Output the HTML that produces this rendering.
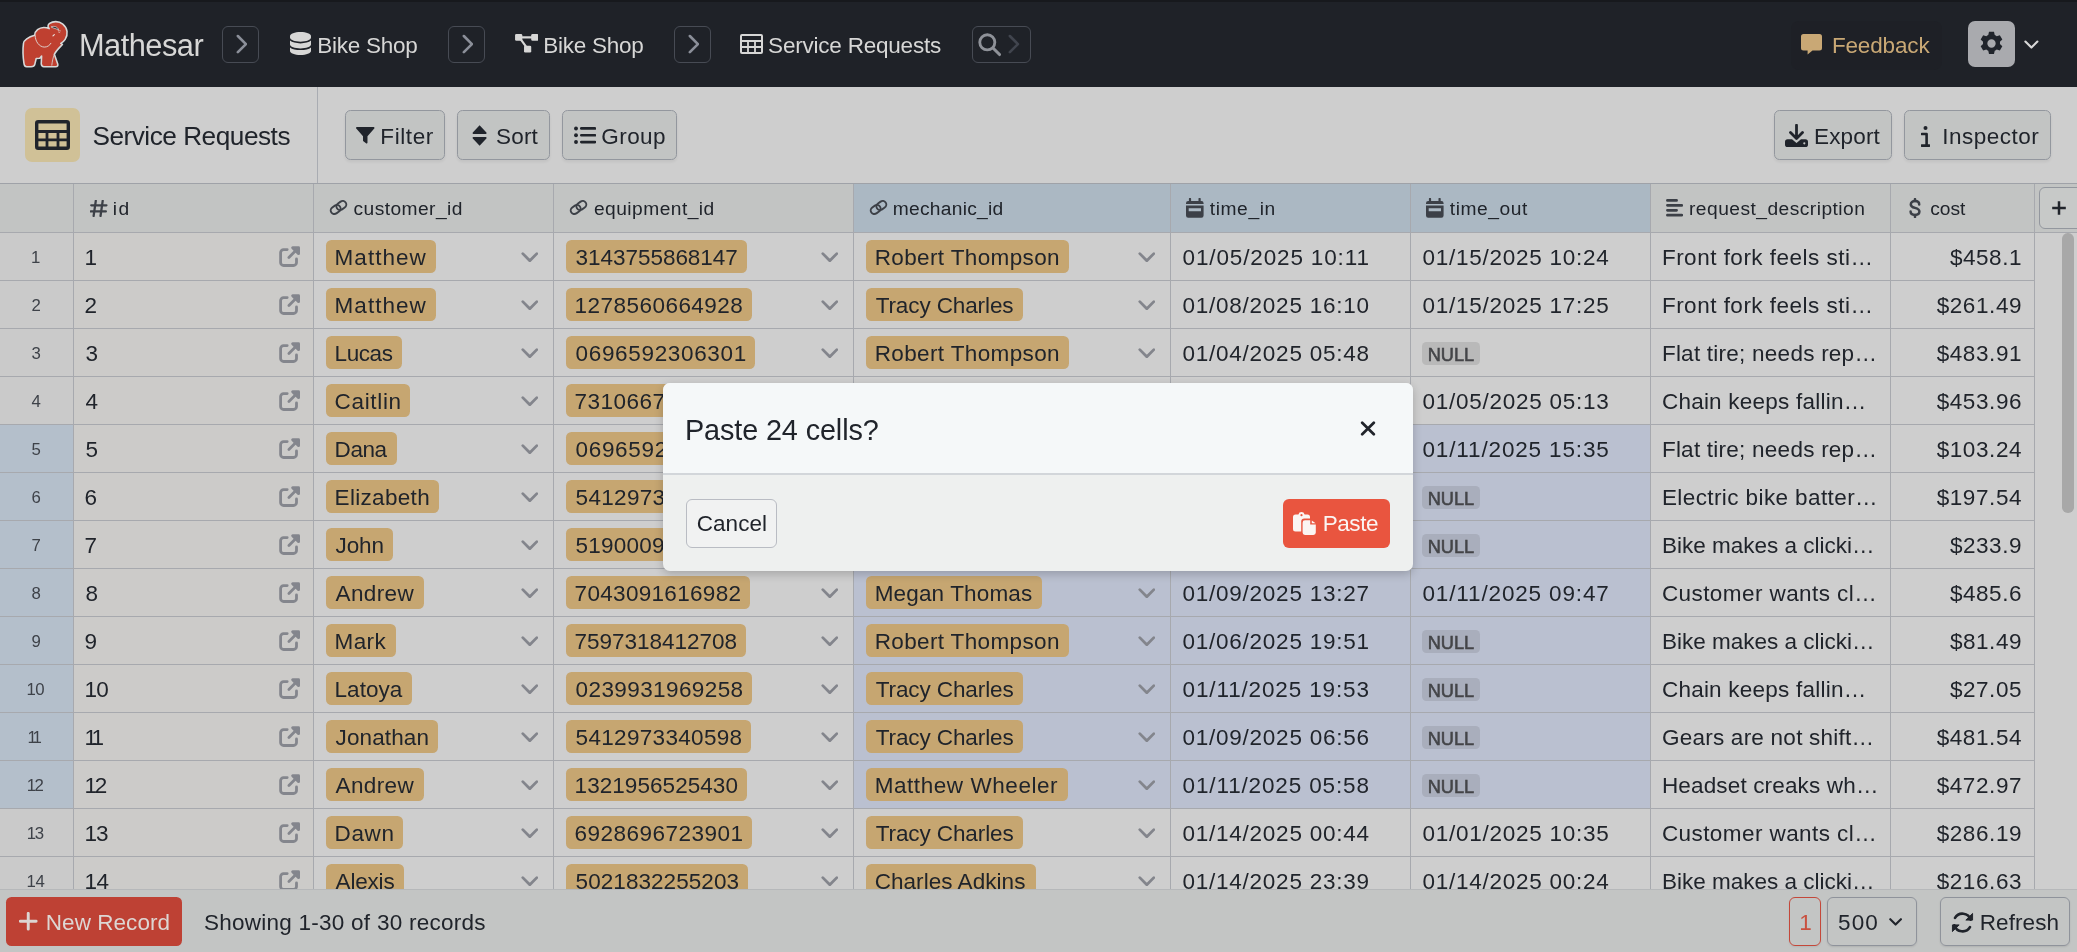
<!DOCTYPE html>
<html><head><meta charset="utf-8"><title>Service Requests | Mathesar</title>
<style>
*{box-sizing:border-box}
html,body{margin:0;padding:0}
body{width:2077px;height:952px;overflow:hidden;background:#cecece;font-family:"Liberation Sans",sans-serif;color:#20242b;position:relative}
.a{position:absolute;display:block}
.t{position:absolute;white-space:nowrap;line-height:1}
#page{position:absolute;left:0;top:0;width:2077px;height:952px;overflow:hidden;will-change:transform}
</style></head><body>
<div id="page">
<div id="grid" class="a" style="left:0;top:0;width:2077px;height:889px;overflow:hidden">
<div class="a" style="left:0px;top:233px;width:73px;height:656px;background:#cacaca;"></div>
<div class="a" style="left:74px;top:233px;width:239px;height:656px;background:#cccbc9;"></div>
<div class="a" style="left:0px;top:425px;width:73px;height:384px;background:#b4bfcb;"></div>
<div class="a" style="left:854px;top:425px;width:796px;height:384px;background:#bac0d0;"></div>
<div class="a" style="left:0px;top:232px;width:2035px;height:1px;background:#a7a9ae;"></div>
<div class="a" style="left:0px;top:280px;width:2035px;height:1px;background:#a7a9ae;"></div>
<div class="a" style="left:0px;top:328px;width:2035px;height:1px;background:#a7a9ae;"></div>
<div class="a" style="left:0px;top:376px;width:2035px;height:1px;background:#a7a9ae;"></div>
<div class="a" style="left:0px;top:424px;width:2035px;height:1px;background:#a7a9ae;"></div>
<div class="a" style="left:0px;top:472px;width:2035px;height:1px;background:#a7a9ae;"></div>
<div class="a" style="left:0px;top:520px;width:2035px;height:1px;background:#a7a9ae;"></div>
<div class="a" style="left:0px;top:568px;width:2035px;height:1px;background:#a7a9ae;"></div>
<div class="a" style="left:0px;top:616px;width:2035px;height:1px;background:#a7a9ae;"></div>
<div class="a" style="left:0px;top:664px;width:2035px;height:1px;background:#a7a9ae;"></div>
<div class="a" style="left:0px;top:712px;width:2035px;height:1px;background:#a7a9ae;"></div>
<div class="a" style="left:0px;top:760px;width:2035px;height:1px;background:#a7a9ae;"></div>
<div class="a" style="left:0px;top:808px;width:2035px;height:1px;background:#a7a9ae;"></div>
<div class="a" style="left:0px;top:856px;width:2035px;height:1px;background:#a7a9ae;"></div>
<span class="t" style="left:31.00px;top:250px;font-size:16.8px;color:#3e4249;">1</span>
<span class="t" style="left:84.40px;top:247px;font-size:22.5px;">1</span>
<svg class="a" style="left:279.1px;top:245.9px;" width="21" height="21" viewBox="0 0 21 21"><path d="M8.2 3.6 H4.6 A3 3 0 0 0 1.6 6.6 V16.5 A3 3 0 0 0 4.6 19.5 H14.5 A3 3 0 0 0 17.5 16.5 V13" fill="none" stroke="#84868d" stroke-width="2.8" stroke-linecap="round"/><path d="M13.6 1.7 H19.6 V7.7 Z" fill="#84868d" stroke="#84868d" stroke-width="2.8" stroke-linejoin="round"/><path d="M18.6 2.7 L9.9 11.4" fill="none" stroke="#84868d" stroke-width="2.8" stroke-linecap="round"/></svg>
<div class="a" style="left:326.1px;top:240px;width:109.9px;height:33px;background:#c6a671;border-radius:5.5px;"></div>
<span class="t" style="left:334.60px;top:247px;font-size:22.5px;letter-spacing:1.019px;">Matthew</span>
<svg class="a" style="left:520.7px;top:251.6px;" width="17.6" height="10.8" viewBox="0 0 16 10"><path d="M1.5 1.5 L8 8 L14.5 1.5" fill="none" stroke="#83858c" stroke-width="2.6" stroke-linecap="round" stroke-linejoin="round"/></svg>
<div class="a" style="left:566.1px;top:240px;width:180.7px;height:33px;background:#c6a671;border-radius:5.5px;"></div>
<span class="t" style="left:575.60px;top:247px;font-size:22.5px;letter-spacing:-0.038px;">3143755868147</span>
<svg class="a" style="left:820.9px;top:251.6px;" width="17.6" height="10.8" viewBox="0 0 16 10"><path d="M1.5 1.5 L8 8 L14.5 1.5" fill="none" stroke="#83858c" stroke-width="2.6" stroke-linecap="round" stroke-linejoin="round"/></svg>
<div class="a" style="left:866.2px;top:240px;width:202.8px;height:33px;background:#c6a671;border-radius:5.5px;"></div>
<span class="t" style="left:874.70px;top:247px;font-size:22.5px;letter-spacing:0.373px;">Robert Thompson</span>
<svg class="a" style="left:1137.5px;top:251.6px;" width="17.6" height="10.8" viewBox="0 0 16 10"><path d="M1.5 1.5 L8 8 L14.5 1.5" fill="none" stroke="#83858c" stroke-width="2.6" stroke-linecap="round" stroke-linejoin="round"/></svg>
<span class="t" style="left:1182.60px;top:247px;font-size:22.5px;letter-spacing:0.854px;">01/05/2025 10:11</span>
<span class="t" style="left:1422.50px;top:247px;font-size:22.5px;letter-spacing:0.743px;">01/15/2025 10:24</span>
<span class="t" style="left:1661.90px;top:247px;font-size:22.5px;letter-spacing:0.495px;">Front fork feels sti…</span>
<span class="t" style="left:1949.90px;top:247px;font-size:22.5px;letter-spacing:0.559px;">$458.1</span>
<span class="t" style="left:31.50px;top:298px;font-size:16.8px;color:#3e4249;">2</span>
<span class="t" style="left:84.40px;top:295px;font-size:22.5px;">2</span>
<svg class="a" style="left:279.1px;top:293.9px;" width="21" height="21" viewBox="0 0 21 21"><path d="M8.2 3.6 H4.6 A3 3 0 0 0 1.6 6.6 V16.5 A3 3 0 0 0 4.6 19.5 H14.5 A3 3 0 0 0 17.5 16.5 V13" fill="none" stroke="#84868d" stroke-width="2.8" stroke-linecap="round"/><path d="M13.6 1.7 H19.6 V7.7 Z" fill="#84868d" stroke="#84868d" stroke-width="2.8" stroke-linejoin="round"/><path d="M18.6 2.7 L9.9 11.4" fill="none" stroke="#84868d" stroke-width="2.8" stroke-linecap="round"/></svg>
<div class="a" style="left:326.1px;top:288px;width:109.9px;height:33px;background:#c6a671;border-radius:5.5px;"></div>
<span class="t" style="left:334.60px;top:295px;font-size:22.5px;letter-spacing:1.019px;">Matthew</span>
<svg class="a" style="left:520.7px;top:299.6px;" width="17.6" height="10.8" viewBox="0 0 16 10"><path d="M1.5 1.5 L8 8 L14.5 1.5" fill="none" stroke="#83858c" stroke-width="2.6" stroke-linecap="round" stroke-linejoin="round"/></svg>
<div class="a" style="left:566.1px;top:288px;width:185.7px;height:33px;background:#c6a671;border-radius:5.5px;"></div>
<span class="t" style="left:574.60px;top:295px;font-size:22.5px;letter-spacing:0.462px;">1278560664928</span>
<svg class="a" style="left:820.9px;top:299.6px;" width="17.6" height="10.8" viewBox="0 0 16 10"><path d="M1.5 1.5 L8 8 L14.5 1.5" fill="none" stroke="#83858c" stroke-width="2.6" stroke-linecap="round" stroke-linejoin="round"/></svg>
<div class="a" style="left:866.2px;top:288px;width:156.6px;height:33px;background:#c6a671;border-radius:5.5px;"></div>
<span class="t" style="left:875.70px;top:295px;font-size:22.5px;letter-spacing:-0.112px;">Tracy Charles</span>
<svg class="a" style="left:1137.5px;top:299.6px;" width="17.6" height="10.8" viewBox="0 0 16 10"><path d="M1.5 1.5 L8 8 L14.5 1.5" fill="none" stroke="#83858c" stroke-width="2.6" stroke-linecap="round" stroke-linejoin="round"/></svg>
<span class="t" style="left:1182.60px;top:295px;font-size:22.5px;letter-spacing:0.743px;">01/08/2025 16:10</span>
<span class="t" style="left:1422.50px;top:295px;font-size:22.5px;letter-spacing:0.743px;">01/15/2025 17:25</span>
<span class="t" style="left:1661.90px;top:295px;font-size:22.5px;letter-spacing:0.495px;">Front fork feels sti…</span>
<span class="t" style="left:1936.70px;top:295px;font-size:22.5px;letter-spacing:0.580px;">$261.49</span>
<span class="t" style="left:31.50px;top:346px;font-size:16.8px;color:#3e4249;">3</span>
<span class="t" style="left:85.40px;top:343px;font-size:22.5px;">3</span>
<svg class="a" style="left:279.1px;top:341.9px;" width="21" height="21" viewBox="0 0 21 21"><path d="M8.2 3.6 H4.6 A3 3 0 0 0 1.6 6.6 V16.5 A3 3 0 0 0 4.6 19.5 H14.5 A3 3 0 0 0 17.5 16.5 V13" fill="none" stroke="#84868d" stroke-width="2.8" stroke-linecap="round"/><path d="M13.6 1.7 H19.6 V7.7 Z" fill="#84868d" stroke="#84868d" stroke-width="2.8" stroke-linejoin="round"/><path d="M18.6 2.7 L9.9 11.4" fill="none" stroke="#84868d" stroke-width="2.8" stroke-linecap="round"/></svg>
<div class="a" style="left:326.1px;top:336px;width:76.1px;height:33px;background:#c6a671;border-radius:5.5px;"></div>
<span class="t" style="left:334.60px;top:343px;font-size:22.5px;letter-spacing:-0.423px;">Lucas</span>
<svg class="a" style="left:520.7px;top:347.6px;" width="17.6" height="10.8" viewBox="0 0 16 10"><path d="M1.5 1.5 L8 8 L14.5 1.5" fill="none" stroke="#83858c" stroke-width="2.6" stroke-linecap="round" stroke-linejoin="round"/></svg>
<div class="a" style="left:566.1px;top:336px;width:189.1px;height:33px;background:#c6a671;border-radius:5.5px;"></div>
<span class="t" style="left:575.60px;top:343px;font-size:22.5px;letter-spacing:0.662px;">0696592306301</span>
<svg class="a" style="left:820.9px;top:347.6px;" width="17.6" height="10.8" viewBox="0 0 16 10"><path d="M1.5 1.5 L8 8 L14.5 1.5" fill="none" stroke="#83858c" stroke-width="2.6" stroke-linecap="round" stroke-linejoin="round"/></svg>
<div class="a" style="left:866.2px;top:336px;width:202.8px;height:33px;background:#c6a671;border-radius:5.5px;"></div>
<span class="t" style="left:874.70px;top:343px;font-size:22.5px;letter-spacing:0.373px;">Robert Thompson</span>
<svg class="a" style="left:1137.5px;top:347.6px;" width="17.6" height="10.8" viewBox="0 0 16 10"><path d="M1.5 1.5 L8 8 L14.5 1.5" fill="none" stroke="#83858c" stroke-width="2.6" stroke-linecap="round" stroke-linejoin="round"/></svg>
<span class="t" style="left:1182.60px;top:343px;font-size:22.5px;letter-spacing:0.743px;">01/04/2025 05:48</span>
<div class="a" style="left:1422.1px;top:342px;width:57.9px;height:23px;background:#b9b9b9;border-radius:4.5px;"></div>
<span class="t" style="left:1427.80px;top:346px;font-size:18.2px;letter-spacing:-0.061px;color:#444548;-webkit-text-stroke:0.55px #444548;">NULL</span>
<span class="t" style="left:1661.90px;top:343px;font-size:22.5px;letter-spacing:0.245px;">Flat tire; needs rep…</span>
<span class="t" style="left:1936.70px;top:343px;font-size:22.5px;letter-spacing:0.580px;">$483.91</span>
<span class="t" style="left:31.50px;top:394px;font-size:16.8px;color:#3e4249;">4</span>
<span class="t" style="left:85.40px;top:391px;font-size:22.5px;">4</span>
<svg class="a" style="left:279.1px;top:389.9px;" width="21" height="21" viewBox="0 0 21 21"><path d="M8.2 3.6 H4.6 A3 3 0 0 0 1.6 6.6 V16.5 A3 3 0 0 0 4.6 19.5 H14.5 A3 3 0 0 0 17.5 16.5 V13" fill="none" stroke="#84868d" stroke-width="2.8" stroke-linecap="round"/><path d="M13.6 1.7 H19.6 V7.7 Z" fill="#84868d" stroke="#84868d" stroke-width="2.8" stroke-linejoin="round"/><path d="M18.6 2.7 L9.9 11.4" fill="none" stroke="#84868d" stroke-width="2.8" stroke-linecap="round"/></svg>
<div class="a" style="left:326.1px;top:384px;width:84.0px;height:33px;background:#c6a671;border-radius:5.5px;"></div>
<span class="t" style="left:334.60px;top:391px;font-size:22.5px;letter-spacing:0.665px;">Caitlin</span>
<svg class="a" style="left:520.7px;top:395.6px;" width="17.6" height="10.8" viewBox="0 0 16 10"><path d="M1.5 1.5 L8 8 L14.5 1.5" fill="none" stroke="#83858c" stroke-width="2.6" stroke-linecap="round" stroke-linejoin="round"/></svg>
<div class="a" style="left:566.1px;top:384px;width:185.9px;height:33px;background:#c6a671;border-radius:5.5px;"></div>
<span class="t" style="left:574.60px;top:391px;font-size:22.5px;letter-spacing:0.478px;">7310667238145</span>
<svg class="a" style="left:820.9px;top:395.6px;" width="17.6" height="10.8" viewBox="0 0 16 10"><path d="M1.5 1.5 L8 8 L14.5 1.5" fill="none" stroke="#83858c" stroke-width="2.6" stroke-linecap="round" stroke-linejoin="round"/></svg>
<div class="a" style="left:866.2px;top:384px;width:156.6px;height:33px;background:#c6a671;border-radius:5.5px;"></div>
<span class="t" style="left:875.70px;top:391px;font-size:22.5px;letter-spacing:-0.112px;">Tracy Charles</span>
<svg class="a" style="left:1137.5px;top:395.6px;" width="17.6" height="10.8" viewBox="0 0 16 10"><path d="M1.5 1.5 L8 8 L14.5 1.5" fill="none" stroke="#83858c" stroke-width="2.6" stroke-linecap="round" stroke-linejoin="round"/></svg>
<span class="t" style="left:1182.60px;top:391px;font-size:22.5px;letter-spacing:0.743px;">01/02/2025 08:15</span>
<span class="t" style="left:1422.50px;top:391px;font-size:22.5px;letter-spacing:0.743px;">01/05/2025 05:13</span>
<span class="t" style="left:1661.90px;top:391px;font-size:22.5px;letter-spacing:0.239px;">Chain keeps fallin…</span>
<span class="t" style="left:1936.70px;top:391px;font-size:22.5px;letter-spacing:0.580px;">$453.96</span>
<span class="t" style="left:31.50px;top:442px;font-size:16.8px;color:#3e4249;">5</span>
<span class="t" style="left:85.40px;top:439px;font-size:22.5px;">5</span>
<svg class="a" style="left:279.1px;top:437.9px;" width="21" height="21" viewBox="0 0 21 21"><path d="M8.2 3.6 H4.6 A3 3 0 0 0 1.6 6.6 V16.5 A3 3 0 0 0 4.6 19.5 H14.5 A3 3 0 0 0 17.5 16.5 V13" fill="none" stroke="#84868d" stroke-width="2.8" stroke-linecap="round"/><path d="M13.6 1.7 H19.6 V7.7 Z" fill="#84868d" stroke="#84868d" stroke-width="2.8" stroke-linejoin="round"/><path d="M18.6 2.7 L9.9 11.4" fill="none" stroke="#84868d" stroke-width="2.8" stroke-linecap="round"/></svg>
<div class="a" style="left:326.1px;top:432px;width:70.9px;height:33px;background:#c6a671;border-radius:5.5px;"></div>
<span class="t" style="left:334.60px;top:439px;font-size:22.5px;letter-spacing:-0.459px;">Dana</span>
<svg class="a" style="left:520.7px;top:443.6px;" width="17.6" height="10.8" viewBox="0 0 16 10"><path d="M1.5 1.5 L8 8 L14.5 1.5" fill="none" stroke="#83858c" stroke-width="2.6" stroke-linecap="round" stroke-linejoin="round"/></svg>
<div class="a" style="left:566.1px;top:432px;width:189.1px;height:33px;background:#c6a671;border-radius:5.5px;"></div>
<span class="t" style="left:575.60px;top:439px;font-size:22.5px;letter-spacing:0.662px;">0696592306301</span>
<svg class="a" style="left:820.9px;top:443.6px;" width="17.6" height="10.8" viewBox="0 0 16 10"><path d="M1.5 1.5 L8 8 L14.5 1.5" fill="none" stroke="#83858c" stroke-width="2.6" stroke-linecap="round" stroke-linejoin="round"/></svg>
<div class="a" style="left:866.2px;top:432px;width:175.7px;height:33px;background:#c6a671;border-radius:5.5px;"></div>
<span class="t" style="left:874.70px;top:439px;font-size:22.5px;letter-spacing:0.148px;">Megan Thomas</span>
<svg class="a" style="left:1137.5px;top:443.6px;" width="17.6" height="10.8" viewBox="0 0 16 10"><path d="M1.5 1.5 L8 8 L14.5 1.5" fill="none" stroke="#83858c" stroke-width="2.6" stroke-linecap="round" stroke-linejoin="round"/></svg>
<span class="t" style="left:1182.60px;top:439px;font-size:22.5px;letter-spacing:0.854px;">01/07/2025 11:42</span>
<span class="t" style="left:1422.50px;top:439px;font-size:22.5px;letter-spacing:0.854px;">01/11/2025 15:35</span>
<span class="t" style="left:1661.90px;top:439px;font-size:22.5px;letter-spacing:0.245px;">Flat tire; needs rep…</span>
<span class="t" style="left:1936.70px;top:439px;font-size:22.5px;letter-spacing:0.580px;">$103.24</span>
<span class="t" style="left:31.50px;top:490px;font-size:16.8px;color:#3e4249;">6</span>
<span class="t" style="left:84.40px;top:487px;font-size:22.5px;">6</span>
<svg class="a" style="left:279.1px;top:485.9px;" width="21" height="21" viewBox="0 0 21 21"><path d="M8.2 3.6 H4.6 A3 3 0 0 0 1.6 6.6 V16.5 A3 3 0 0 0 4.6 19.5 H14.5 A3 3 0 0 0 17.5 16.5 V13" fill="none" stroke="#84868d" stroke-width="2.8" stroke-linecap="round"/><path d="M13.6 1.7 H19.6 V7.7 Z" fill="#84868d" stroke="#84868d" stroke-width="2.8" stroke-linejoin="round"/><path d="M18.6 2.7 L9.9 11.4" fill="none" stroke="#84868d" stroke-width="2.8" stroke-linecap="round"/></svg>
<div class="a" style="left:326.1px;top:480px;width:112.6px;height:33px;background:#c6a671;border-radius:5.5px;"></div>
<span class="t" style="left:334.60px;top:487px;font-size:22.5px;letter-spacing:0.319px;">Elizabeth</span>
<svg class="a" style="left:520.7px;top:491.6px;" width="17.6" height="10.8" viewBox="0 0 16 10"><path d="M1.5 1.5 L8 8 L14.5 1.5" fill="none" stroke="#83858c" stroke-width="2.6" stroke-linecap="round" stroke-linejoin="round"/></svg>
<div class="a" style="left:566.1px;top:480px;width:185.0px;height:33px;background:#c6a671;border-radius:5.5px;"></div>
<span class="t" style="left:575.60px;top:487px;font-size:22.5px;letter-spacing:0.320px;">5412973340598</span>
<svg class="a" style="left:820.9px;top:491.6px;" width="17.6" height="10.8" viewBox="0 0 16 10"><path d="M1.5 1.5 L8 8 L14.5 1.5" fill="none" stroke="#83858c" stroke-width="2.6" stroke-linecap="round" stroke-linejoin="round"/></svg>
<div class="a" style="left:866.2px;top:480px;width:169.7px;height:33px;background:#c6a671;border-radius:5.5px;"></div>
<span class="t" style="left:874.70px;top:487px;font-size:22.5px;letter-spacing:0.049px;">Charles Adkins</span>
<svg class="a" style="left:1137.5px;top:491.6px;" width="17.6" height="10.8" viewBox="0 0 16 10"><path d="M1.5 1.5 L8 8 L14.5 1.5" fill="none" stroke="#83858c" stroke-width="2.6" stroke-linecap="round" stroke-linejoin="round"/></svg>
<span class="t" style="left:1182.60px;top:487px;font-size:22.5px;letter-spacing:0.743px;">01/10/2025 14:03</span>
<div class="a" style="left:1422.1px;top:486px;width:57.9px;height:23px;background:#a9aebc;border-radius:4.5px;"></div>
<span class="t" style="left:1427.80px;top:490px;font-size:18.2px;letter-spacing:-0.061px;color:#444548;-webkit-text-stroke:0.55px #444548;">NULL</span>
<span class="t" style="left:1661.90px;top:487px;font-size:22.5px;letter-spacing:0.406px;">Electric bike batter…</span>
<span class="t" style="left:1936.70px;top:487px;font-size:22.5px;letter-spacing:0.580px;">$197.54</span>
<span class="t" style="left:31.50px;top:538px;font-size:16.8px;color:#3e4249;">7</span>
<span class="t" style="left:84.40px;top:535px;font-size:22.5px;">7</span>
<svg class="a" style="left:279.1px;top:533.9px;" width="21" height="21" viewBox="0 0 21 21"><path d="M8.2 3.6 H4.6 A3 3 0 0 0 1.6 6.6 V16.5 A3 3 0 0 0 4.6 19.5 H14.5 A3 3 0 0 0 17.5 16.5 V13" fill="none" stroke="#84868d" stroke-width="2.8" stroke-linecap="round"/><path d="M13.6 1.7 H19.6 V7.7 Z" fill="#84868d" stroke="#84868d" stroke-width="2.8" stroke-linejoin="round"/><path d="M18.6 2.7 L9.9 11.4" fill="none" stroke="#84868d" stroke-width="2.8" stroke-linecap="round"/></svg>
<div class="a" style="left:326.1px;top:528px;width:66.8px;height:33px;background:#c6a671;border-radius:5.5px;"></div>
<span class="t" style="left:335.60px;top:535px;font-size:22.5px;letter-spacing:-0.159px;">John</span>
<svg class="a" style="left:520.7px;top:539.6px;" width="17.6" height="10.8" viewBox="0 0 16 10"><path d="M1.5 1.5 L8 8 L14.5 1.5" fill="none" stroke="#83858c" stroke-width="2.6" stroke-linecap="round" stroke-linejoin="round"/></svg>
<div class="a" style="left:566.1px;top:528px;width:183.9px;height:33px;background:#c6a671;border-radius:5.5px;"></div>
<span class="t" style="left:575.60px;top:535px;font-size:22.5px;letter-spacing:0.228px;">5190009412876</span>
<svg class="a" style="left:820.9px;top:539.6px;" width="17.6" height="10.8" viewBox="0 0 16 10"><path d="M1.5 1.5 L8 8 L14.5 1.5" fill="none" stroke="#83858c" stroke-width="2.6" stroke-linecap="round" stroke-linejoin="round"/></svg>
<div class="a" style="left:866.2px;top:528px;width:156.6px;height:33px;background:#c6a671;border-radius:5.5px;"></div>
<span class="t" style="left:875.70px;top:535px;font-size:22.5px;letter-spacing:-0.112px;">Tracy Charles</span>
<svg class="a" style="left:1137.5px;top:539.6px;" width="17.6" height="10.8" viewBox="0 0 16 10"><path d="M1.5 1.5 L8 8 L14.5 1.5" fill="none" stroke="#83858c" stroke-width="2.6" stroke-linecap="round" stroke-linejoin="round"/></svg>
<span class="t" style="left:1182.60px;top:535px;font-size:22.5px;letter-spacing:0.743px;">01/12/2025 09:30</span>
<div class="a" style="left:1422.1px;top:534px;width:57.9px;height:23px;background:#a9aebc;border-radius:4.5px;"></div>
<span class="t" style="left:1427.80px;top:538px;font-size:18.2px;letter-spacing:-0.061px;color:#444548;-webkit-text-stroke:0.55px #444548;">NULL</span>
<span class="t" style="left:1661.90px;top:535px;font-size:22.5px;">Bike makes a clicki…</span>
<span class="t" style="left:1949.90px;top:535px;font-size:22.5px;letter-spacing:0.559px;">$233.9</span>
<span class="t" style="left:31.50px;top:586px;font-size:16.8px;color:#3e4249;">8</span>
<span class="t" style="left:85.40px;top:583px;font-size:22.5px;">8</span>
<svg class="a" style="left:279.1px;top:581.9px;" width="21" height="21" viewBox="0 0 21 21"><path d="M8.2 3.6 H4.6 A3 3 0 0 0 1.6 6.6 V16.5 A3 3 0 0 0 4.6 19.5 H14.5 A3 3 0 0 0 17.5 16.5 V13" fill="none" stroke="#84868d" stroke-width="2.8" stroke-linecap="round"/><path d="M13.6 1.7 H19.6 V7.7 Z" fill="#84868d" stroke="#84868d" stroke-width="2.8" stroke-linejoin="round"/><path d="M18.6 2.7 L9.9 11.4" fill="none" stroke="#84868d" stroke-width="2.8" stroke-linecap="round"/></svg>
<div class="a" style="left:326.1px;top:576px;width:97.8px;height:33px;background:#c6a671;border-radius:5.5px;"></div>
<span class="t" style="left:335.60px;top:583px;font-size:22.5px;letter-spacing:0.352px;">Andrew</span>
<svg class="a" style="left:520.7px;top:587.6px;" width="17.6" height="10.8" viewBox="0 0 16 10"><path d="M1.5 1.5 L8 8 L14.5 1.5" fill="none" stroke="#83858c" stroke-width="2.6" stroke-linecap="round" stroke-linejoin="round"/></svg>
<div class="a" style="left:566.1px;top:576px;width:183.9px;height:33px;background:#c6a671;border-radius:5.5px;"></div>
<span class="t" style="left:574.60px;top:583px;font-size:22.5px;letter-spacing:0.312px;">7043091616982</span>
<svg class="a" style="left:820.9px;top:587.6px;" width="17.6" height="10.8" viewBox="0 0 16 10"><path d="M1.5 1.5 L8 8 L14.5 1.5" fill="none" stroke="#83858c" stroke-width="2.6" stroke-linecap="round" stroke-linejoin="round"/></svg>
<div class="a" style="left:866.2px;top:576px;width:175.7px;height:33px;background:#c6a671;border-radius:5.5px;"></div>
<span class="t" style="left:874.70px;top:583px;font-size:22.5px;letter-spacing:0.148px;">Megan Thomas</span>
<svg class="a" style="left:1137.5px;top:587.6px;" width="17.6" height="10.8" viewBox="0 0 16 10"><path d="M1.5 1.5 L8 8 L14.5 1.5" fill="none" stroke="#83858c" stroke-width="2.6" stroke-linecap="round" stroke-linejoin="round"/></svg>
<span class="t" style="left:1182.60px;top:583px;font-size:22.5px;letter-spacing:0.743px;">01/09/2025 13:27</span>
<span class="t" style="left:1422.50px;top:583px;font-size:22.5px;letter-spacing:0.854px;">01/11/2025 09:47</span>
<span class="t" style="left:1661.90px;top:583px;font-size:22.5px;letter-spacing:0.426px;">Customer wants cl…</span>
<span class="t" style="left:1949.90px;top:583px;font-size:22.5px;letter-spacing:0.559px;">$485.6</span>
<span class="t" style="left:31.50px;top:634px;font-size:16.8px;color:#3e4249;">9</span>
<span class="t" style="left:84.40px;top:631px;font-size:22.5px;">9</span>
<svg class="a" style="left:279.1px;top:629.9px;" width="21" height="21" viewBox="0 0 21 21"><path d="M8.2 3.6 H4.6 A3 3 0 0 0 1.6 6.6 V16.5 A3 3 0 0 0 4.6 19.5 H14.5 A3 3 0 0 0 17.5 16.5 V13" fill="none" stroke="#84868d" stroke-width="2.8" stroke-linecap="round"/><path d="M13.6 1.7 H19.6 V7.7 Z" fill="#84868d" stroke="#84868d" stroke-width="2.8" stroke-linejoin="round"/><path d="M18.6 2.7 L9.9 11.4" fill="none" stroke="#84868d" stroke-width="2.8" stroke-linecap="round"/></svg>
<div class="a" style="left:326.1px;top:624px;width:69.9px;height:33px;background:#c6a671;border-radius:5.5px;"></div>
<span class="t" style="left:334.60px;top:631px;font-size:22.5px;letter-spacing:0.384px;">Mark</span>
<svg class="a" style="left:520.7px;top:635.6px;" width="17.6" height="10.8" viewBox="0 0 16 10"><path d="M1.5 1.5 L8 8 L14.5 1.5" fill="none" stroke="#83858c" stroke-width="2.6" stroke-linecap="round" stroke-linejoin="round"/></svg>
<div class="a" style="left:566.1px;top:624px;width:179.8px;height:33px;background:#c6a671;border-radius:5.5px;"></div>
<span class="t" style="left:574.60px;top:631px;font-size:22.5px;letter-spacing:-0.030px;">7597318412708</span>
<svg class="a" style="left:820.9px;top:635.6px;" width="17.6" height="10.8" viewBox="0 0 16 10"><path d="M1.5 1.5 L8 8 L14.5 1.5" fill="none" stroke="#83858c" stroke-width="2.6" stroke-linecap="round" stroke-linejoin="round"/></svg>
<div class="a" style="left:866.2px;top:624px;width:202.6px;height:33px;background:#c6a671;border-radius:5.5px;"></div>
<span class="t" style="left:874.70px;top:631px;font-size:22.5px;letter-spacing:0.359px;">Robert Thompson</span>
<svg class="a" style="left:1137.5px;top:635.6px;" width="17.6" height="10.8" viewBox="0 0 16 10"><path d="M1.5 1.5 L8 8 L14.5 1.5" fill="none" stroke="#83858c" stroke-width="2.6" stroke-linecap="round" stroke-linejoin="round"/></svg>
<span class="t" style="left:1182.60px;top:631px;font-size:22.5px;letter-spacing:0.743px;">01/06/2025 19:51</span>
<div class="a" style="left:1422.1px;top:630px;width:57.9px;height:23px;background:#a9aebc;border-radius:4.5px;"></div>
<span class="t" style="left:1427.80px;top:634px;font-size:18.2px;letter-spacing:-0.061px;color:#444548;-webkit-text-stroke:0.55px #444548;">NULL</span>
<span class="t" style="left:1661.90px;top:631px;font-size:22.5px;">Bike makes a clicki…</span>
<span class="t" style="left:1949.90px;top:631px;font-size:22.5px;letter-spacing:0.559px;">$81.49</span>
<span class="t" style="left:26.50px;top:682px;font-size:16.8px;letter-spacing:-0.633px;color:#3e4249;">10</span>
<span class="t" style="left:84.60px;top:679px;font-size:22.5px;letter-spacing:-0.913px;">10</span>
<svg class="a" style="left:279.1px;top:677.9px;" width="21" height="21" viewBox="0 0 21 21"><path d="M8.2 3.6 H4.6 A3 3 0 0 0 1.6 6.6 V16.5 A3 3 0 0 0 4.6 19.5 H14.5 A3 3 0 0 0 17.5 16.5 V13" fill="none" stroke="#84868d" stroke-width="2.8" stroke-linecap="round"/><path d="M13.6 1.7 H19.6 V7.7 Z" fill="#84868d" stroke="#84868d" stroke-width="2.8" stroke-linejoin="round"/><path d="M18.6 2.7 L9.9 11.4" fill="none" stroke="#84868d" stroke-width="2.8" stroke-linecap="round"/></svg>
<div class="a" style="left:326.1px;top:672px;width:86.1px;height:33px;background:#c6a671;border-radius:5.5px;"></div>
<span class="t" style="left:334.60px;top:679px;font-size:22.5px;letter-spacing:0.012px;">Latoya</span>
<svg class="a" style="left:520.7px;top:683.6px;" width="17.6" height="10.8" viewBox="0 0 16 10"><path d="M1.5 1.5 L8 8 L14.5 1.5" fill="none" stroke="#83858c" stroke-width="2.6" stroke-linecap="round" stroke-linejoin="round"/></svg>
<div class="a" style="left:566.1px;top:672px;width:186.0px;height:33px;background:#c6a671;border-radius:5.5px;"></div>
<span class="t" style="left:575.60px;top:679px;font-size:22.5px;letter-spacing:0.403px;">0239931969258</span>
<svg class="a" style="left:820.9px;top:683.6px;" width="17.6" height="10.8" viewBox="0 0 16 10"><path d="M1.5 1.5 L8 8 L14.5 1.5" fill="none" stroke="#83858c" stroke-width="2.6" stroke-linecap="round" stroke-linejoin="round"/></svg>
<div class="a" style="left:866.2px;top:672px;width:156.8px;height:33px;background:#c6a671;border-radius:5.5px;"></div>
<span class="t" style="left:875.70px;top:679px;font-size:22.5px;letter-spacing:-0.096px;">Tracy Charles</span>
<svg class="a" style="left:1137.5px;top:683.6px;" width="17.6" height="10.8" viewBox="0 0 16 10"><path d="M1.5 1.5 L8 8 L14.5 1.5" fill="none" stroke="#83858c" stroke-width="2.6" stroke-linecap="round" stroke-linejoin="round"/></svg>
<span class="t" style="left:1182.60px;top:679px;font-size:22.5px;letter-spacing:0.854px;">01/11/2025 19:53</span>
<div class="a" style="left:1422.1px;top:678px;width:57.9px;height:23px;background:#a9aebc;border-radius:4.5px;"></div>
<span class="t" style="left:1427.80px;top:682px;font-size:18.2px;letter-spacing:-0.061px;color:#444548;-webkit-text-stroke:0.55px #444548;">NULL</span>
<span class="t" style="left:1661.90px;top:679px;font-size:22.5px;letter-spacing:0.239px;">Chain keeps fallin…</span>
<span class="t" style="left:1949.90px;top:679px;font-size:22.5px;letter-spacing:0.559px;">$27.05</span>
<span class="t" style="left:27.60px;top:730px;font-size:16.8px;letter-spacing:-3.087px;color:#3e4249;">11</span>
<span class="t" style="left:84.60px;top:727px;font-size:22.5px;letter-spacing:-3.844px;">11</span>
<svg class="a" style="left:279.1px;top:725.9px;" width="21" height="21" viewBox="0 0 21 21"><path d="M8.2 3.6 H4.6 A3 3 0 0 0 1.6 6.6 V16.5 A3 3 0 0 0 4.6 19.5 H14.5 A3 3 0 0 0 17.5 16.5 V13" fill="none" stroke="#84868d" stroke-width="2.8" stroke-linecap="round"/><path d="M13.6 1.7 H19.6 V7.7 Z" fill="#84868d" stroke="#84868d" stroke-width="2.8" stroke-linejoin="round"/><path d="M18.6 2.7 L9.9 11.4" fill="none" stroke="#84868d" stroke-width="2.8" stroke-linecap="round"/></svg>
<div class="a" style="left:326.1px;top:720px;width:111.9px;height:33px;background:#c6a671;border-radius:5.5px;"></div>
<span class="t" style="left:335.60px;top:727px;font-size:22.5px;letter-spacing:0.119px;">Jonathan</span>
<svg class="a" style="left:520.7px;top:731.6px;" width="17.6" height="10.8" viewBox="0 0 16 10"><path d="M1.5 1.5 L8 8 L14.5 1.5" fill="none" stroke="#83858c" stroke-width="2.6" stroke-linecap="round" stroke-linejoin="round"/></svg>
<div class="a" style="left:566.1px;top:720px;width:185.0px;height:33px;background:#c6a671;border-radius:5.5px;"></div>
<span class="t" style="left:575.60px;top:727px;font-size:22.5px;letter-spacing:0.320px;">5412973340598</span>
<svg class="a" style="left:820.9px;top:731.6px;" width="17.6" height="10.8" viewBox="0 0 16 10"><path d="M1.5 1.5 L8 8 L14.5 1.5" fill="none" stroke="#83858c" stroke-width="2.6" stroke-linecap="round" stroke-linejoin="round"/></svg>
<div class="a" style="left:866.2px;top:720px;width:156.8px;height:33px;background:#c6a671;border-radius:5.5px;"></div>
<span class="t" style="left:875.70px;top:727px;font-size:22.5px;letter-spacing:-0.096px;">Tracy Charles</span>
<svg class="a" style="left:1137.5px;top:731.6px;" width="17.6" height="10.8" viewBox="0 0 16 10"><path d="M1.5 1.5 L8 8 L14.5 1.5" fill="none" stroke="#83858c" stroke-width="2.6" stroke-linecap="round" stroke-linejoin="round"/></svg>
<span class="t" style="left:1182.60px;top:727px;font-size:22.5px;letter-spacing:0.743px;">01/09/2025 06:56</span>
<div class="a" style="left:1422.1px;top:726px;width:57.9px;height:23px;background:#a9aebc;border-radius:4.5px;"></div>
<span class="t" style="left:1427.80px;top:730px;font-size:18.2px;letter-spacing:-0.061px;color:#444548;-webkit-text-stroke:0.55px #444548;">NULL</span>
<span class="t" style="left:1661.90px;top:727px;font-size:22.5px;letter-spacing:0.243px;">Gears are not shift…</span>
<span class="t" style="left:1936.70px;top:727px;font-size:22.5px;letter-spacing:0.580px;">$481.54</span>
<span class="t" style="left:26.80px;top:778px;font-size:16.8px;letter-spacing:-1.633px;color:#3e4249;">12</span>
<span class="t" style="left:84.60px;top:775px;font-size:22.5px;letter-spacing:-2.413px;">12</span>
<svg class="a" style="left:279.1px;top:773.9px;" width="21" height="21" viewBox="0 0 21 21"><path d="M8.2 3.6 H4.6 A3 3 0 0 0 1.6 6.6 V16.5 A3 3 0 0 0 4.6 19.5 H14.5 A3 3 0 0 0 17.5 16.5 V13" fill="none" stroke="#84868d" stroke-width="2.8" stroke-linecap="round"/><path d="M13.6 1.7 H19.6 V7.7 Z" fill="#84868d" stroke="#84868d" stroke-width="2.8" stroke-linejoin="round"/><path d="M18.6 2.7 L9.9 11.4" fill="none" stroke="#84868d" stroke-width="2.8" stroke-linecap="round"/></svg>
<div class="a" style="left:326.1px;top:768px;width:97.8px;height:33px;background:#c6a671;border-radius:5.5px;"></div>
<span class="t" style="left:335.60px;top:775px;font-size:22.5px;letter-spacing:0.352px;">Andrew</span>
<svg class="a" style="left:520.7px;top:779.6px;" width="17.6" height="10.8" viewBox="0 0 16 10"><path d="M1.5 1.5 L8 8 L14.5 1.5" fill="none" stroke="#83858c" stroke-width="2.6" stroke-linecap="round" stroke-linejoin="round"/></svg>
<div class="a" style="left:566.1px;top:768px;width:180.8px;height:33px;background:#c6a671;border-radius:5.5px;"></div>
<span class="t" style="left:574.60px;top:775px;font-size:22.5px;letter-spacing:0.053px;">1321956525430</span>
<svg class="a" style="left:820.9px;top:779.6px;" width="17.6" height="10.8" viewBox="0 0 16 10"><path d="M1.5 1.5 L8 8 L14.5 1.5" fill="none" stroke="#83858c" stroke-width="2.6" stroke-linecap="round" stroke-linejoin="round"/></svg>
<div class="a" style="left:866.2px;top:768px;width:201.4px;height:33px;background:#c6a671;border-radius:5.5px;"></div>
<span class="t" style="left:874.70px;top:775px;font-size:22.5px;letter-spacing:0.559px;">Matthew Wheeler</span>
<svg class="a" style="left:1137.5px;top:779.6px;" width="17.6" height="10.8" viewBox="0 0 16 10"><path d="M1.5 1.5 L8 8 L14.5 1.5" fill="none" stroke="#83858c" stroke-width="2.6" stroke-linecap="round" stroke-linejoin="round"/></svg>
<span class="t" style="left:1182.60px;top:775px;font-size:22.5px;letter-spacing:0.854px;">01/11/2025 05:58</span>
<div class="a" style="left:1422.1px;top:774px;width:57.9px;height:23px;background:#a9aebc;border-radius:4.5px;"></div>
<span class="t" style="left:1427.80px;top:778px;font-size:18.2px;letter-spacing:-0.061px;color:#444548;-webkit-text-stroke:0.55px #444548;">NULL</span>
<span class="t" style="left:1661.90px;top:775px;font-size:22.5px;letter-spacing:0.157px;">Headset creaks wh…</span>
<span class="t" style="left:1936.70px;top:775px;font-size:22.5px;letter-spacing:0.580px;">$472.97</span>
<span class="t" style="left:26.70px;top:826px;font-size:16.8px;letter-spacing:-1.233px;color:#3e4249;">13</span>
<span class="t" style="left:84.60px;top:823px;font-size:22.5px;letter-spacing:-1.213px;">13</span>
<svg class="a" style="left:279.1px;top:821.9px;" width="21" height="21" viewBox="0 0 21 21"><path d="M8.2 3.6 H4.6 A3 3 0 0 0 1.6 6.6 V16.5 A3 3 0 0 0 4.6 19.5 H14.5 A3 3 0 0 0 17.5 16.5 V13" fill="none" stroke="#84868d" stroke-width="2.8" stroke-linecap="round"/><path d="M13.6 1.7 H19.6 V7.7 Z" fill="#84868d" stroke="#84868d" stroke-width="2.8" stroke-linejoin="round"/><path d="M18.6 2.7 L9.9 11.4" fill="none" stroke="#84868d" stroke-width="2.8" stroke-linecap="round"/></svg>
<div class="a" style="left:326.1px;top:816px;width:76.8px;height:33px;background:#c6a671;border-radius:5.5px;"></div>
<span class="t" style="left:334.60px;top:823px;font-size:22.5px;letter-spacing:0.596px;">Dawn</span>
<svg class="a" style="left:520.7px;top:827.6px;" width="17.6" height="10.8" viewBox="0 0 16 10"><path d="M1.5 1.5 L8 8 L14.5 1.5" fill="none" stroke="#83858c" stroke-width="2.6" stroke-linecap="round" stroke-linejoin="round"/></svg>
<div class="a" style="left:566.1px;top:816px;width:186.0px;height:33px;background:#c6a671;border-radius:5.5px;"></div>
<span class="t" style="left:574.60px;top:823px;font-size:22.5px;letter-spacing:0.487px;">6928696723901</span>
<svg class="a" style="left:820.9px;top:827.6px;" width="17.6" height="10.8" viewBox="0 0 16 10"><path d="M1.5 1.5 L8 8 L14.5 1.5" fill="none" stroke="#83858c" stroke-width="2.6" stroke-linecap="round" stroke-linejoin="round"/></svg>
<div class="a" style="left:866.2px;top:816px;width:156.8px;height:33px;background:#c6a671;border-radius:5.5px;"></div>
<span class="t" style="left:875.70px;top:823px;font-size:22.5px;letter-spacing:-0.096px;">Tracy Charles</span>
<svg class="a" style="left:1137.5px;top:827.6px;" width="17.6" height="10.8" viewBox="0 0 16 10"><path d="M1.5 1.5 L8 8 L14.5 1.5" fill="none" stroke="#83858c" stroke-width="2.6" stroke-linecap="round" stroke-linejoin="round"/></svg>
<span class="t" style="left:1182.60px;top:823px;font-size:22.5px;letter-spacing:0.743px;">01/14/2025 00:44</span>
<span class="t" style="left:1422.50px;top:823px;font-size:22.5px;letter-spacing:0.743px;">01/01/2025 10:35</span>
<span class="t" style="left:1661.90px;top:823px;font-size:22.5px;letter-spacing:0.426px;">Customer wants cl…</span>
<span class="t" style="left:1936.70px;top:823px;font-size:22.5px;letter-spacing:0.580px;">$286.19</span>
<span class="t" style="left:26.60px;top:874px;font-size:16.8px;letter-spacing:-0.533px;color:#3e4249;">14</span>
<span class="t" style="left:84.60px;top:871px;font-size:22.5px;letter-spacing:-0.613px;">14</span>
<svg class="a" style="left:279.1px;top:869.9px;" width="21" height="21" viewBox="0 0 21 21"><path d="M8.2 3.6 H4.6 A3 3 0 0 0 1.6 6.6 V16.5 A3 3 0 0 0 4.6 19.5 H14.5 A3 3 0 0 0 17.5 16.5 V13" fill="none" stroke="#84868d" stroke-width="2.8" stroke-linecap="round"/><path d="M13.6 1.7 H19.6 V7.7 Z" fill="#84868d" stroke="#84868d" stroke-width="2.8" stroke-linejoin="round"/><path d="M18.6 2.7 L9.9 11.4" fill="none" stroke="#84868d" stroke-width="2.8" stroke-linecap="round"/></svg>
<div class="a" style="left:326.1px;top:864px;width:77.8px;height:33px;background:#c6a671;border-radius:5.5px;"></div>
<span class="t" style="left:335.60px;top:871px;font-size:22.5px;letter-spacing:-0.194px;">Alexis</span>
<svg class="a" style="left:520.7px;top:875.6px;" width="17.6" height="10.8" viewBox="0 0 16 10"><path d="M1.5 1.5 L8 8 L14.5 1.5" fill="none" stroke="#83858c" stroke-width="2.6" stroke-linecap="round" stroke-linejoin="round"/></svg>
<div class="a" style="left:566.1px;top:864px;width:181.9px;height:33px;background:#c6a671;border-radius:5.5px;"></div>
<span class="t" style="left:575.60px;top:871px;font-size:22.5px;letter-spacing:0.062px;">5021832255203</span>
<svg class="a" style="left:820.9px;top:875.6px;" width="17.6" height="10.8" viewBox="0 0 16 10"><path d="M1.5 1.5 L8 8 L14.5 1.5" fill="none" stroke="#83858c" stroke-width="2.6" stroke-linecap="round" stroke-linejoin="round"/></svg>
<div class="a" style="left:866.2px;top:864px;width:169.7px;height:33px;background:#c6a671;border-radius:5.5px;"></div>
<span class="t" style="left:874.70px;top:871px;font-size:22.5px;letter-spacing:0.049px;">Charles Adkins</span>
<svg class="a" style="left:1137.5px;top:875.6px;" width="17.6" height="10.8" viewBox="0 0 16 10"><path d="M1.5 1.5 L8 8 L14.5 1.5" fill="none" stroke="#83858c" stroke-width="2.6" stroke-linecap="round" stroke-linejoin="round"/></svg>
<span class="t" style="left:1182.60px;top:871px;font-size:22.5px;letter-spacing:0.743px;">01/14/2025 23:39</span>
<span class="t" style="left:1422.50px;top:871px;font-size:22.5px;letter-spacing:0.743px;">01/14/2025 00:24</span>
<span class="t" style="left:1661.90px;top:871px;font-size:22.5px;">Bike makes a clicki…</span>
<span class="t" style="left:1936.70px;top:871px;font-size:22.5px;letter-spacing:0.580px;">$216.63</span>
<div class="a" style="left:73px;top:233px;width:1px;height:656px;background:#a7a9ae;"></div>
<div class="a" style="left:313px;top:233px;width:1px;height:656px;background:#a7a9ae;"></div>
<div class="a" style="left:553px;top:233px;width:1px;height:656px;background:#a7a9ae;"></div>
<div class="a" style="left:853px;top:233px;width:1px;height:656px;background:#a7a9ae;"></div>
<div class="a" style="left:1170px;top:233px;width:1px;height:656px;background:#a7a9ae;"></div>
<div class="a" style="left:1410px;top:233px;width:1px;height:656px;background:#a7a9ae;"></div>
<div class="a" style="left:1650px;top:233px;width:1px;height:656px;background:#a7a9ae;"></div>
<div class="a" style="left:1890px;top:233px;width:1px;height:656px;background:#a7a9ae;"></div>
<div class="a" style="left:2034px;top:233px;width:1px;height:656px;background:#a7a9ae;"></div>
</div>
<div class="a" style="left:2062px;top:233.3px;width:11.6px;height:279.7px;background:#a8a8a8;border-radius:5.8px;"></div>
<div class="a" style="left:0px;top:0px;width:2077px;height:87px;background:#1f2228;"></div>
<div class="a" style="left:0px;top:0px;width:2077px;height:1.5px;background:#17191d;"></div>
<svg class="a" style="left:14px;top:14px;" width="66" height="60" viewBox="0 0 1047 952"><path d="M150 470 C150 420 230 365 328 338 C330 262 400 216 470 214 C502 213 532 220 558 232 C528 200 538 170 566 150 C612 116 706 104 774 160 C852 224 862 322 812 402 C794 430 772 452 742 466 L768 484 C722 532 664 588 640 640 L694 792 C702 822 690 836 660 836 L472 836 C442 836 436 822 432 792 L438 668 L408 702 L352 706 L330 800 C324 830 300 838 270 838 L200 838 C170 838 160 812 158 782 C142 680 138 560 150 470 Z" fill="#bf4030" stroke="#d7d9d9" stroke-width="25" stroke-linejoin="round"/>
<path d="M588 206 C630 184 696 202 708 252 C676 234 630 228 588 206 Z" fill="#1f2228" stroke="#d7d9d9" stroke-width="12" stroke-linejoin="round"/>
<path d="M335 345 C340 440 400 520 480 525 C530 525 565 500 585 465" fill="none" stroke="#e3e0de" stroke-width="14" stroke-linecap="round"/>
<path d="M618 348 L640 326" stroke="#e8e4e2" stroke-width="18" stroke-linecap="round"/>
<path d="M700 262 L738 268 M706 286 L726 294" stroke="#e3e0de" stroke-width="9" stroke-linecap="round"/>
<path d="M640 640 C616 700 606 760 600 812" fill="none" stroke="#d7d9d9" stroke-width="13" stroke-linecap="round"/></svg>
<span class="t" style="left:79.00px;top:31px;font-size:30.8px;letter-spacing:-0.531px;color:#d7d7d6;">Mathesar</span>
<div class="a" style="left:222px;top:26px;width:37px;height:37px;border:1.5px solid #474b54;border-radius:6px;"></div>
<svg class="a" style="left:235.6px;top:34.4px;" width="11.8" height="20.2" viewBox="0 0 9.5 16"><path d="M1.5 1.5 L8 8 L1.5 14.5" fill="none" stroke="#8b8f99" stroke-width="2.1" stroke-linecap="round" stroke-linejoin="round"/></svg>
<svg class="a" style="left:290px;top:32px;" width="21" height="23" viewBox="0 0 21 23"><path d="M0 4.2 C0 1.9 4.7 0 10.5 0 S21 1.9 21 4.2 V5.6 C21 7.9 16.3 9.8 10.5 9.8 S0 7.9 0 5.6 Z" fill="#d7d7d6"/>
<path d="M0 8.6 C2 10.4 6 11.4 10.5 11.4 S19 10.4 21 8.6 V12.6 C21 14.9 16.3 16.4 10.5 16.4 S0 14.9 0 12.6 Z" fill="#d7d7d6"/>
<path d="M0 15.4 C2 17.2 6 18.1 10.5 18.1 S19 17.2 21 15.4 V19 C21 21.3 16.3 23 10.5 23 S0 21.3 0 19 Z" fill="#d7d7d6"/></svg>
<span class="t" style="left:317.20px;top:35px;font-size:22.5px;letter-spacing:-0.244px;color:#d7d7d6;">Bike Shop</span>
<div class="a" style="left:448px;top:26px;width:37px;height:37px;border:1.5px solid #474b54;border-radius:6px;"></div>
<svg class="a" style="left:461.6px;top:34.4px;" width="11.8" height="20.2" viewBox="0 0 9.5 16"><path d="M1.5 1.5 L8 8 L1.5 14.5" fill="none" stroke="#8b8f99" stroke-width="2.1" stroke-linecap="round" stroke-linejoin="round"/></svg>
<svg class="a" style="left:514.5px;top:34.3px;" width="23.5" height="18.5" viewBox="0 0 24 19"><rect x="0" y="0" width="7.4" height="7" rx="1.3" fill="#d7d7d6"/><rect x="16.6" y="0" width="7.4" height="7" rx="1.3" fill="#d7d7d6"/><rect x="9.2" y="12" width="7.4" height="7" rx="1.3" fill="#d7d7d6"/><path d="M6 3.5 H18 M5.5 5 L12 14" stroke="#d7d7d6" stroke-width="2.2" fill="none"/></svg>
<span class="t" style="left:543.30px;top:35px;font-size:22.5px;letter-spacing:-0.269px;color:#d7d7d6;">Bike Shop</span>
<div class="a" style="left:674px;top:26px;width:36.5px;height:37px;border:1.5px solid #474b54;border-radius:6px;"></div>
<svg class="a" style="left:687.6px;top:34.4px;" width="11.8" height="20.2" viewBox="0 0 9.5 16"><path d="M1.5 1.5 L8 8 L1.5 14.5" fill="none" stroke="#8b8f99" stroke-width="2.1" stroke-linecap="round" stroke-linejoin="round"/></svg>
<svg class="a" style="left:740px;top:33.5px;" width="23" height="20" viewBox="0 0 23 20"><rect x="1" y="1" width="21" height="18" rx="1" fill="none" stroke="#d7d7d6" stroke-width="2"/><path d="M1 7 H22 M1 13 H22 M8 7 V19 M15 7 V19" stroke="#d7d7d6" stroke-width="1.8" fill="none"/></svg>
<span class="t" style="left:768.10px;top:35px;font-size:22.5px;letter-spacing:-0.212px;color:#d7d7d6;">Service Requests</span>
<div class="a" style="left:972px;top:26px;width:59px;height:37px;border:1.5px solid #474b54;border-radius:6px;"></div>
<svg class="a" style="left:977.5px;top:33px;" width="23.5" height="23.5" viewBox="0 0 24 24"><circle cx="9.5" cy="9.5" r="7.7" fill="none" stroke="#8f9299" stroke-width="2.9"/><path d="M15.3 15.3 L22 22" stroke="#8f9299" stroke-width="3.1" stroke-linecap="round"/></svg>
<svg class="a" style="left:1008.2px;top:34.4px;" width="11.8" height="20.2" viewBox="0 0 9.5 16"><path d="M1.5 1.5 L8 8 L1.5 14.5" fill="none" stroke="#41454e" stroke-width="2.1" stroke-linecap="round" stroke-linejoin="round"/></svg>
<div class="a" style="left:1791px;top:21px;width:151px;height:49px;background:#1e2026;border-radius:8px;"></div>
<svg class="a" style="left:1801px;top:34px;" width="21" height="21" viewBox="0 0 21 21"><path d="M2.5 0 H18.5 A2.5 2.5 0 0 1 21 2.5 V14 A2.5 2.5 0 0 1 18.5 16.5 H11.5 L6.6 20.6 V16.5 H2.5 A2.5 2.5 0 0 1 0 14 V2.5 A2.5 2.5 0 0 1 2.5 0 Z" fill="#c9a875"/></svg>
<span class="t" style="left:1831.90px;top:35px;font-size:22.5px;letter-spacing:-0.152px;color:#c9a875;">Feedback</span>
<div class="a" style="left:1968px;top:21px;width:47px;height:46px;background:#a9aaae;border-radius:7px;"></div>
<svg class="a" style="left:1979.4px;top:31.35px;" width="25" height="25" viewBox="0 0 24 24"><path fill="#20242b" fill-rule="evenodd" d="M9.6 0.8 h4.8 l0.7 3.1 a8.3 8.3 0 0 1 1.9 1.1 l3-1 2.4 4.2 -2.3 2.1 a8.3 8.3 0 0 1 0 2.2 l2.3 2.1 -2.4 4.2 -3 -1 a8.3 8.3 0 0 1 -1.9 1.1 l-0.7 3.1 h-4.8 l-0.7 -3.1 a8.3 8.3 0 0 1 -1.9 -1.1 l-3 1 -2.4 -4.2 2.3 -2.1 a8.3 8.3 0 0 1 0 -2.2 l-2.3 -2.1 2.4 -4.2 3 1 a8.3 8.3 0 0 1 1.9 -1.1 z M12 8 a4 4 0 1 0 0 8 a4 4 0 1 0 0 -8 z"/></svg>
<svg class="a" style="left:2024.3px;top:39.6px;" width="14.8" height="9.6" viewBox="0 0 16 10"><path d="M1.5 1.5 L8 8 L14.5 1.5" fill="none" stroke="#d8d8d8" stroke-width="2.3" stroke-linecap="round" stroke-linejoin="round"/></svg>
<div class="a" style="left:317px;top:87px;width:1px;height:96px;background:#a9acb2;"></div>
<div class="a" style="left:25px;top:108px;width:55px;height:54px;background:#d0c197;border-radius:7px;"></div>
<svg class="a" style="left:35px;top:120px;" width="35" height="30" viewBox="0 0 35 30"><rect x="1.7" y="1.7" width="31.6" height="26.6" rx="1.5" fill="none" stroke="#20242b" stroke-width="3.4"/><path d="M1.7 11.5 H33.3 M1.7 19.8 H33.3 M12 11.5 V28 M23 11.5 V28" stroke="#20242b" stroke-width="2.8" fill="none"/></svg>
<span class="t" style="left:92.40px;top:123px;font-size:26.2px;letter-spacing:-0.476px;">Service Requests</span>
<div class="a" style="left:345px;top:110px;width:100px;height:49.5px;background:#c2c4c3;border:1px solid #93979e;border-radius:5.5px;box-shadow:0 2px 3px rgba(0,0,0,0.06);"></div>
<svg class="a" style="left:356px;top:127px;" width="18.5" height="16.5" viewBox="0 0 19 17"><path d="M0.9 0 H18.1 C18.9 0 19.3 0.9 18.8 1.5 L11.8 9.6 V15.9 C11.8 16.7 10.9 17.2 10.3 16.7 L7.6 14.6 C7.3 14.4 7.2 14.1 7.2 13.8 V9.6 L0.2 1.5 C-0.3 0.9 0.1 0 0.9 0 Z" fill="#20242b"/></svg>
<span class="t" style="left:380.30px;top:126px;font-size:22.5px;letter-spacing:0.599px;">Filter</span>
<div class="a" style="left:457px;top:110px;width:93px;height:49.5px;background:#c2c4c3;border:1px solid #93979e;border-radius:5.5px;box-shadow:0 2px 3px rgba(0,0,0,0.06);"></div>
<svg class="a" style="left:471.8px;top:124.8px;" width="15.2" height="21" viewBox="0 0 15 21"><path d="M7.5 0.3 L14.3 7.6 C14.8 8.2 14.4 9 13.7 9 H1.3 C0.6 9 0.2 8.2 0.7 7.6 Z M7.5 20.7 L14.3 13.4 C14.8 12.8 14.4 12 13.7 12 H1.3 C0.6 12 0.2 12.8 0.7 13.4 Z" fill="#20242b"/></svg>
<span class="t" style="left:496.10px;top:126px;font-size:22.5px;letter-spacing:0.162px;">Sort</span>
<div class="a" style="left:562px;top:110px;width:115px;height:49.5px;background:#c2c4c3;border:1px solid #93979e;border-radius:5.5px;box-shadow:0 2px 3px rgba(0,0,0,0.06);"></div>
<svg class="a" style="left:573.5px;top:126px;" width="22.5" height="18.5" viewBox="0 0 23 19"><circle cx="2" cy="2.5" r="2" fill="#20242b"/><circle cx="2" cy="9.5" r="2" fill="#20242b"/><circle cx="2" cy="16.5" r="2" fill="#20242b"/><path d="M7.5 2.5 H21.5 M7.5 9.5 H21.5 M7.5 16.5 H21.5" stroke="#20242b" stroke-width="2.8" stroke-linecap="round"/></svg>
<span class="t" style="left:601.30px;top:126px;font-size:22.5px;letter-spacing:0.420px;">Group</span>
<div class="a" style="left:1774px;top:110px;width:118px;height:49.5px;background:#c2c4c3;border:1px solid #93979e;border-radius:5.5px;box-shadow:0 2px 3px rgba(0,0,0,0.06);"></div>
<svg class="a" style="left:1785px;top:124px;" width="23" height="23" viewBox="0 0 23 23"><path d="M11.5 1.2 V14 M5.5 8.6 L11.5 14.6 L17.5 8.6" fill="none" stroke="#20242b" stroke-width="2.8" stroke-linecap="round" stroke-linejoin="round"/><path d="M2.6 15.2 H7 L11.5 19 L16 15.2 H20.4 A2.6 2.6 0 0 1 23 17.8 V20.4 A2.6 2.6 0 0 1 20.4 23 H2.6 A2.6 2.6 0 0 1 0 20.4 V17.8 A2.6 2.6 0 0 1 2.6 15.2 Z" fill="#20242b"/><circle cx="19.3" cy="19.3" r="1.1" fill="#c2c4c3"/></svg>
<span class="t" style="left:1814.00px;top:126px;font-size:22.5px;letter-spacing:0.165px;">Export</span>
<div class="a" style="left:1904px;top:110px;width:147px;height:49.5px;background:#c2c4c3;border:1px solid #93979e;border-radius:5.5px;box-shadow:0 2px 3px rgba(0,0,0,0.06);"></div>
<svg class="a" style="left:1921px;top:125.5px;" width="9" height="21" viewBox="0 0 9 21"><circle cx="4.5" cy="2" r="2" fill="#20242b"/><path d="M1 8 H5.6 V19.4 M0.6 19.6 H8.4" stroke="#20242b" stroke-width="2.6" stroke-linecap="round" stroke-linejoin="round" fill="none"/></svg>
<span class="t" style="left:1942.20px;top:126px;font-size:22.5px;letter-spacing:0.505px;">Inspector</span>
<div class="a" style="left:0px;top:183px;width:2077px;height:49px;background:#c2c4c3;"></div>
<div class="a" style="left:854px;top:184px;width:796px;height:48px;background:#abb8c3;"></div>
<div class="a" style="left:0px;top:182.7px;width:2077px;height:1.5px;background:#9fa2a8;"></div>
<div class="a" style="left:0px;top:232px;width:2077px;height:1px;background:#a7a9ae;"></div>
<div class="a" style="left:73px;top:184px;width:1px;height:48px;background:#a7a9ae;"></div>
<div class="a" style="left:313px;top:184px;width:1px;height:48px;background:#a7a9ae;"></div>
<div class="a" style="left:553px;top:184px;width:1px;height:48px;background:#a7a9ae;"></div>
<div class="a" style="left:853px;top:184px;width:1px;height:48px;background:#a7a9ae;"></div>
<div class="a" style="left:1170px;top:184px;width:1px;height:48px;background:#a7a9ae;"></div>
<div class="a" style="left:1410px;top:184px;width:1px;height:48px;background:#a7a9ae;"></div>
<div class="a" style="left:1650px;top:184px;width:1px;height:48px;background:#a7a9ae;"></div>
<div class="a" style="left:1890px;top:184px;width:1px;height:48px;background:#a7a9ae;"></div>
<div class="a" style="left:2034px;top:184px;width:1px;height:48px;background:#a7a9ae;"></div>
<svg class="a" style="left:90.3px;top:200.3px;" width="17.3" height="16.8" viewBox="0 0 17 17"><path d="M5.6 0.8 L3.4 16.2 M12.6 0.8 L10.4 16.2 M1 5.4 H16.4 M0.4 11.6 H15.8" stroke="#3c4047" stroke-width="2.3" stroke-linecap="round"/></svg>
<span class="t" style="left:112.70px;top:199px;font-size:19.2px;letter-spacing:1.637px;">id</span>
<svg class="a" style="left:329.4px;top:200.2px;" width="19" height="15" viewBox="0 0 19 15"><g transform="rotate(-35 9.5 7.5)" fill="none" stroke="#3c4047" stroke-width="1.9"><rect x="0.8" y="3.9" width="10.4" height="7.2" rx="3.6"/><rect x="7.8" y="3.9" width="10.4" height="7.2" rx="3.6"/></g></svg>
<span class="t" style="left:353.50px;top:199px;font-size:19.2px;letter-spacing:0.436px;">customer_id</span>
<svg class="a" style="left:569.4px;top:200.2px;" width="19" height="15" viewBox="0 0 19 15"><g transform="rotate(-35 9.5 7.5)" fill="none" stroke="#3c4047" stroke-width="1.9"><rect x="0.8" y="3.9" width="10.4" height="7.2" rx="3.6"/><rect x="7.8" y="3.9" width="10.4" height="7.2" rx="3.6"/></g></svg>
<span class="t" style="left:593.90px;top:199px;font-size:19.2px;letter-spacing:0.469px;">equipment_id</span>
<svg class="a" style="left:869.4px;top:200.2px;" width="19" height="15" viewBox="0 0 19 15"><g transform="rotate(-35 9.5 7.5)" fill="none" stroke="#3c4047" stroke-width="1.9"><rect x="0.8" y="3.9" width="10.4" height="7.2" rx="3.6"/><rect x="7.8" y="3.9" width="10.4" height="7.2" rx="3.6"/></g></svg>
<span class="t" style="left:892.80px;top:199px;font-size:19.2px;letter-spacing:0.265px;">mechanic_id</span>
<svg class="a" style="left:1186.2px;top:198px;" width="17.6" height="19.8" viewBox="0 0 17.6 19.8"><path d="M4 0.9 V3.6 M13.6 0.9 V3.6" stroke="#3c4047" stroke-width="2.2" stroke-linecap="round"/><path d="M2.2 3.1 H15.4 A2.2 2.2 0 0 1 17.6 5.3 V5.9 H0 V5.3 A2.2 2.2 0 0 1 2.2 3.1 Z" fill="#3c4047"/><path d="M0 7.6 H17.6 V17.6 A2.2 2.2 0 0 1 15.4 19.8 H2.2 A2.2 2.2 0 0 1 0 17.6 Z M2.7 10.2 V13.3 H15 V10.2 Z" fill="#3c4047" fill-rule="evenodd"/></svg>
<span class="t" style="left:1209.70px;top:199px;font-size:19.2px;letter-spacing:0.620px;">time_in</span>
<svg class="a" style="left:1426.2px;top:198px;" width="17.6" height="19.8" viewBox="0 0 17.6 19.8"><path d="M4 0.9 V3.6 M13.6 0.9 V3.6" stroke="#3c4047" stroke-width="2.2" stroke-linecap="round"/><path d="M2.2 3.1 H15.4 A2.2 2.2 0 0 1 17.6 5.3 V5.9 H0 V5.3 A2.2 2.2 0 0 1 2.2 3.1 Z" fill="#3c4047"/><path d="M0 7.6 H17.6 V17.6 A2.2 2.2 0 0 1 15.4 19.8 H2.2 A2.2 2.2 0 0 1 0 17.6 Z M2.7 10.2 V13.3 H15 V10.2 Z" fill="#3c4047" fill-rule="evenodd"/></svg>
<span class="t" style="left:1449.80px;top:199px;font-size:19.2px;letter-spacing:0.563px;">time_out</span>
<svg class="a" style="left:1666.2px;top:199px;" width="17.3" height="17.6" viewBox="0 0 17.3 17.6"><path d="M1.4 1.4 H10.6 M1.4 6.35 H15.9 M1.4 11.3 H10.6 M1.4 16.2 H15.9" stroke="#3c4047" stroke-width="2.7" stroke-linecap="round"/></svg>
<span class="t" style="left:1689.00px;top:199px;font-size:19.2px;letter-spacing:0.467px;">request_description</span>
<svg class="a" style="left:1908.7px;top:198.2px;" width="12" height="20" viewBox="0 0 12 20"><path d="M6 1.1 V3 M6 17 V18.9" stroke="#3c4047" stroke-width="2.5" stroke-linecap="round"/><path d="M10.2 6.4 C10.2 4.2 8.4 3.1 6 3.1 C3.6 3.1 1.8 4.3 1.8 6.4 C1.8 8.6 3.8 9.3 6 9.9 C8.4 10.5 10.4 11.3 10.4 13.6 C10.4 15.8 8.6 16.9 6 16.9 C3.4 16.9 1.6 15.7 1.6 13.6" fill="none" stroke="#3c4047" stroke-width="2.5" stroke-linecap="round"/></svg>
<span class="t" style="left:1930.30px;top:199px;font-size:19.2px;letter-spacing:-0.086px;">cost</span>
<div class="a" style="left:2039px;top:187px;width:51px;height:41.5px;background:#c7c9c8;border:1px solid #93979e;border-radius:6px;"></div>
<svg class="a" style="left:2051.8px;top:201.3px;" width="14" height="14" viewBox="0 0 14 14"><path d="M7 0.2 V13.8 M0.2 7 H13.8" stroke="#20242b" stroke-width="2.5"/></svg>
<div class="a" style="left:0px;top:889px;width:2077px;height:63px;background:#c3c5c4;"></div>
<div class="a" style="left:0px;top:889px;width:2077px;height:1px;background:#b6b8ba;"></div>
<div class="a" style="left:6px;top:897px;width:176px;height:49px;background:#be4134;border-radius:5.5px;"></div>
<svg class="a" style="left:19.4px;top:912.3px;" width="18.5" height="18.5" viewBox="0 0 19 19"><path d="M9.5 1.4 V17.6 M1.4 9.5 H17.6" stroke="#dcd5d2" stroke-width="3" stroke-linecap="round"/></svg>
<span class="t" style="left:45.80px;top:912px;font-size:22.5px;letter-spacing:0.047px;color:#ddd6d3;">New Record</span>
<span class="t" style="left:203.90px;top:912px;font-size:22.5px;letter-spacing:0.259px;">Showing 1-30 of 30 records</span>
<div class="a" style="left:1789px;top:897.2px;width:31.6px;height:48.8px;border:1px solid #c4483a;border-radius:6px;box-shadow:0 1px 2px rgba(0,0,0,0.08);"></div>
<span class="t" style="left:1799.30px;top:912px;font-size:22.5px;color:#c9503f;">1</span>
<div class="a" style="left:1827.3px;top:897.2px;width:89.3px;height:48.8px;border:1px solid #8f939b;border-radius:6px;box-shadow:0 1px 2px rgba(0,0,0,0.1);"></div>
<span class="t" style="left:1838.00px;top:912px;font-size:22.5px;letter-spacing:1.137px;">500</span>
<svg class="a" style="left:1889.4px;top:918.4px;" width="13.2" height="8.2" viewBox="0 0 16 10"><path d="M1.5 1.5 L8 8 L14.5 1.5" fill="none" stroke="#20242b" stroke-width="2.6" stroke-linecap="round" stroke-linejoin="round"/></svg>
<div class="a" style="left:1940px;top:897.2px;width:129.6px;height:48.8px;border:1px solid #8f939b;border-radius:6px;box-shadow:0 1px 2px rgba(0,0,0,0.1);"></div>
<svg class="a" style="left:1951px;top:910.5px;" width="23" height="23" viewBox="0 0 24 24"><path d="M20.5 9 A9 9 0 0 0 4.2 7.2 M3.5 15 A9 9 0 0 0 19.8 16.8" fill="none" stroke="#20242b" stroke-width="2.8" stroke-linecap="round"/><path d="M22.5 2.5 V9.5 H15.5 Z M1.5 21.5 V14.5 H8.5 Z" fill="#20242b" stroke="#20242b" stroke-width="1" stroke-linejoin="round"/></svg>
<span class="t" style="left:1979.70px;top:912px;font-size:22.5px;letter-spacing:0.088px;">Refresh</span>
<div class="a" style="left:663px;top:383px;width:750px;height:187.5px;background:#eef0ef;border-radius:7px;box-shadow:0 3px 10px rgba(0,0,0,0.2);"></div>
<div class="a" style="left:663px;top:383px;width:750px;height:91px;background:#f5f8f9;border-radius:7px 7px 0 0;"></div>
<div class="a" style="left:663px;top:473.4px;width:750px;height:2.0px;background:#d2d6da;"></div>
<span class="t" style="left:685.00px;top:416px;font-size:28.8px;letter-spacing:-0.113px;">Paste 24 cells?</span>
<svg class="a" style="left:1359.6px;top:421.4px;" width="16" height="15" viewBox="0 0 16 16"><path d="M1.8 1.8 L14.2 14.2 M14.2 1.8 L1.8 14.2" stroke="#20242b" stroke-width="2.9" stroke-linecap="round"/></svg>
<div class="a" style="left:686.2px;top:499px;width:90.5px;height:48.6px;background:#f1f2f2;border:1.5px solid #b9bcc3;border-radius:6px;"></div>
<span class="t" style="left:696.80px;top:513px;font-size:22.5px;letter-spacing:0.032px;">Cancel</span>
<div class="a" style="left:1283px;top:499px;width:107px;height:48.6px;background:#e9553f;border-radius:6px;"></div>
<svg class="a" style="left:1293px;top:512.4px;" width="23" height="23" viewBox="0 0 23 23"><path d="M2.5 2.5 H5.4 A3.2 3.2 0 0 1 11.6 2.5 H14.5 A2.5 2.5 0 0 1 17 5 V6.4 H11.4 A3.2 3.2 0 0 0 8.2 9.6 V19.5 H2.5 A2.5 2.5 0 0 1 0 17 V5 A2.5 2.5 0 0 1 2.5 2.5 Z" fill="#fbf5f3"/><circle cx="8.5" cy="3.2" r="1.1" fill="#e9553f"/><path d="M12 8.3 H17.2 V12.6 H22.8 V20.6 A2.4 2.4 0 0 1 20.4 23 H12 A2.4 2.4 0 0 1 9.6 20.6 V10.7 A2.4 2.4 0 0 1 12 8.3 Z M18.8 8.6 L22.6 11.2 H18.8 Z" fill="#fbf5f3"/></svg>
<span class="t" style="left:1322.70px;top:513px;font-size:22.5px;letter-spacing:-0.430px;color:#fbf5f3;">Paste</span>
</div>
</body></html>
